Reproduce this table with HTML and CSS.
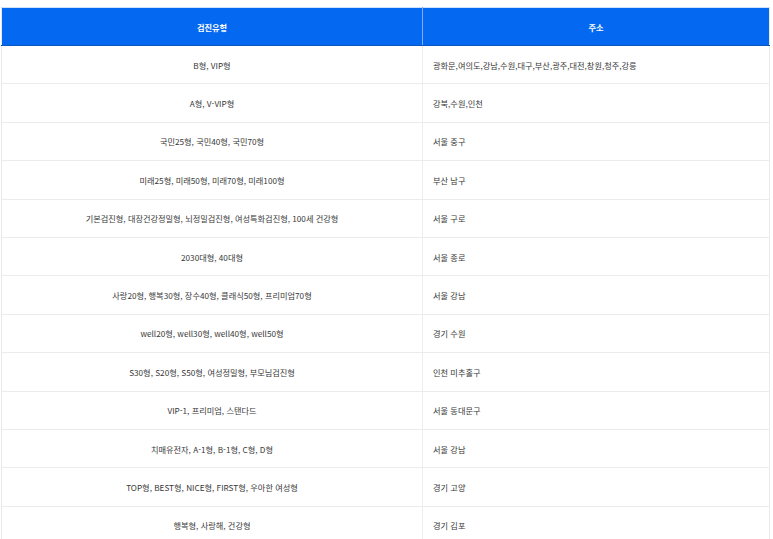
FILE: index.html
```html
<!DOCTYPE html>
<html lang="ko">
<head>
<meta charset="utf-8">
<link rel="stylesheet" href="styles.css">
</head>
<body>
<table class="clinic-table">
  <thead>
    <tr><th class="col-type">검진유형</th><th class="col-addr">주소</th></tr>
  </thead>
  <tbody>
    <tr><td class="type">B형, VIP형</td><td class="addr">광화문,여의도,강남,수원,대구,부산,광주,대전,창원,청주,강릉</td></tr>
    <tr><td class="type">A형, V-VIP형</td><td class="addr">강북,수원,인천</td></tr>
    <tr><td class="type">국민25형, 국민40형, 국민70형</td><td class="addr">서울 중구</td></tr>
    <tr><td class="type">미래25형, 미래50형, 미래70형, 미래100형</td><td class="addr">부산 남구</td></tr>
    <tr><td class="type">기본검진형, 대장건강정밀형, 뇌정밀검진형, 여성특화검진형, 100세 건강형</td><td class="addr">서울 구로</td></tr>
    <tr><td class="type">2030대형, 40대형</td><td class="addr">서울 종로</td></tr>
    <tr><td class="type">사랑20형, 행복30형, 장수40형, 클래식50형, 프리미엄70형</td><td class="addr">서울 강남</td></tr>
    <tr><td class="type">well20형, well30형, well40형, well50형</td><td class="addr">경기 수원</td></tr>
    <tr><td class="type">S30형, S20형, S50형, 여성정밀형, 부모님검진형</td><td class="addr">인천 미추홀구</td></tr>
    <tr><td class="type">VIP-1, 프리미엄, 스탠다드</td><td class="addr">서울 동대문구</td></tr>
    <tr><td class="type">치매유전자, A-1형, B-1형, C형, D형</td><td class="addr">서울 강남</td></tr>
    <tr><td class="type">TOP형, BEST형, NICE형, FIRST형, 우아한 여성형</td><td class="addr">경기 고양</td></tr>
    <tr><td class="type">행복형, 사랑해, 건강형</td><td class="addr">경기 김포</td></tr>
  </tbody>
</table>
</body>
</html>
```

FILE: styles.css
```css
html, body {
  margin: 0;
  padding: 0;
  background: #ffffff;
}
body {
  padding: 7px 3px 0 1px;
  font-family: "Noto Sans CJK KR", "Noto Sans", sans-serif;
  font-size: 8.2px;
  color: #383838;
}
.clinic-table {
  width: 769px;
  border-collapse: collapse;
  table-layout: fixed;
  border: 1px solid #e6ebf2;
}
.clinic-table th {
  height: 37px;
  padding: 0;
  background: #0568f0;
  color: #ffffff;
  font-weight: 700;
  font-size: 8.2px;
  text-align: center;
  border-bottom: 1px solid #0a57c4;
  border-top: 1px solid #cfe0fb;
}
.col-type {
  width: 420px;
  border-right: 1px solid #7fb0f5;
}
.col-addr {
  border-left: 1px solid #7fb0f5;
}
.clinic-table td {
  height: 37.4px;
  padding: 0;
  border-bottom: 1px solid #ececec;
  vertical-align: middle;
}
.clinic-table td.type {
  text-align: center;
  border-right: 1px solid #eeeeee;
}
.clinic-table td.addr {
  text-align: left;
  padding-left: 10px;
}
```
